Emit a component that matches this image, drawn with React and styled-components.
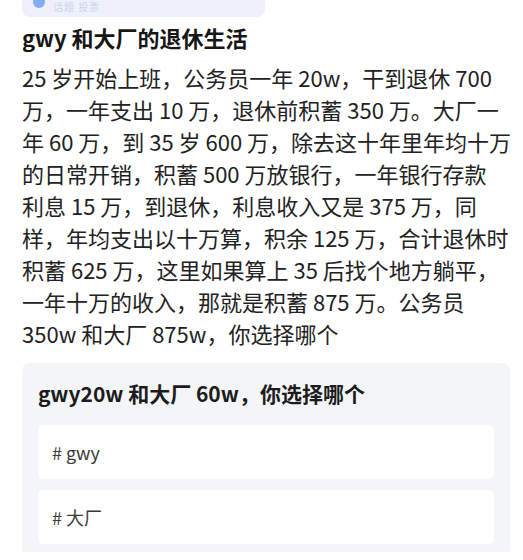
import React from 'react';
import styled, { createGlobalStyle } from 'styled-components';

const GlobalStyle = createGlobalStyle`
  body {
    margin: 0;
    background: #ffffff;
    font-family: "Noto Sans CJK SC", "Noto Sans", sans-serif;
  }
`;

const Root = styled.div`
  width: 523px;
  height: 560px;
  overflow: hidden;
  display: flex;
  flex-direction: column;
`;

const Chip = styled.div`
  margin-left: 22px;
  width: 243px;
  height: 17px;
  background: #eef1fb;
  border-radius: 0 0 8px 8px;
  overflow: hidden;
  display: flex;
  align-items: flex-start;
  gap: 8px;
  padding-left: 11px;
  box-sizing: border-box;
`;

const ChipIcon = styled.div`
  width: 12px;
  height: 12px;
  margin-top: -4px;
  border-radius: 50%;
  background: #5b8def;
  opacity: 0.7;
`;

const ChipText = styled.div`
  font-size: 10px;
  line-height: 12px;
  margin-top: 1px;
  color: #cdd3e8;
  letter-spacing: 1px;
`;

const Title = styled.h1`
  margin: 6px 0 0 22px;
  font-size: 22px;
  line-height: 28px;
  font-weight: 700;
  color: #161616;
`;

const Body = styled.div`
  margin: 10px 0 0 22px;
  font-size: 22px;
  line-height: 32px;
  color: #222222;
`;

const Line = styled.div`
  white-space: nowrap;
`;

const Card = styled.div`
  margin: 14px 13px 0 22px;
  padding: 15px 16px 8px 16px;
  background: #f4f5f7;
  border-radius: 8px 8px 0 0;
  display: flex;
  flex-direction: column;
  gap: 11px;
`;

const Question = styled.div`
  font-size: 21px;
  line-height: 30px;
  font-weight: 700;
  color: #1c1c1c;
  margin-bottom: 6px;
`;

const Option = styled.div`
  height: 54px;
  background: #ffffff;
  border-radius: 5px;
  display: flex;
  align-items: center;
  padding-left: 14px;
  font-size: 18px;
  color: #3a3a3a;
`;

const lines = [
  '25 岁开始上班，公务员一年 20w，干到退休 700',
  '万，一年支出 10 万，退休前积蓄 350 万。大厂一',
  '年 60 万，到 35 岁 600 万，除去这十年里年均十万',
  '的日常开销，积蓄 500 万放银行，一年银行存款',
  '利息 15 万，到退休，利息收入又是 375 万，同',
  '样，年均支出以十万算，积余 125 万，合计退休时',
  '积蓄 625 万，这里如果算上 35 后找个地方躺平，',
  '一年十万的收入，那就是积蓄 875 万。公务员',
  '350w 和大厂 875w，你选择哪个',
];

const options = ['# gwy', '# 大厂'];

export default function App() {
  return (
    <Root>
      <GlobalStyle />
      <Chip>
        <ChipIcon />
        <ChipText>话题 投票</ChipText>
      </Chip>
      <Title>gwy 和大厂的退休生活</Title>
      <Body>
        {lines.map((l, i) => (
          <Line key={i}>{l}</Line>
        ))}
      </Body>
      <Card>
        <Question>gwy20w 和大厂 60w，你选择哪个</Question>
        {options.map((o) => (
          <Option key={o}>{o}</Option>
        ))}
      </Card>
    </Root>
  );
}
